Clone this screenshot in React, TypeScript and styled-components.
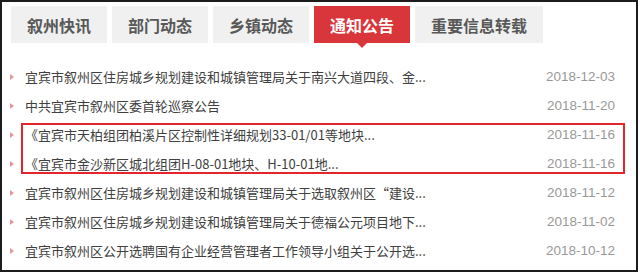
import React from 'react'
import styled, { createGlobalStyle } from 'styled-components'

const GlobalStyle = createGlobalStyle`
  html, body {
    margin: 0;
    padding: 0;
    background: #fff;
  }
  body {
    font-family: "Microsoft YaHei", "Noto Sans CJK SC", sans-serif;
  }
`

const Frame = styled.div`
  box-sizing: border-box;
  width: 638px;
  height: 272px;
  border: 2px solid #1c1c1c;
  padding: 4px 0 0 9px;
  background: #fff;
`

const TabBar = styled.div`
  display: flex;
  gap: 5px;
`

const Tab = styled.div<{ $active?: boolean }>`
  position: relative;
  height: 37px;
  padding: 0 16px;
  display: flex;
  align-items: center;
  font-size: 16px;
  font-weight: bold;
  color: ${p => (p.$active ? '#fff' : '#585858')};
  background: ${p => (p.$active ? '#d9363b' : '#f0f0f0')};

  ${p => p.$active && `
    &::after {
      content: '';
      position: absolute;
      left: 50%;
      bottom: -5px;
      margin-left: -5px;
      border-left: 5px solid transparent;
      border-right: 5px solid transparent;
      border-top: 5px solid #d9363b;
    }
  `}
`

const List = styled.ul`
  position: relative;
  list-style: none;
  margin: 19px 0 0 -9px;
  padding: 0;
`

const Row = styled.li`
  height: 29px;
  display: flex;
  align-items: center;
  padding: 0 21px 0 8px;
  font-size: 13px;
`

const Bullet = styled.span`
  width: 0;
  height: 0;
  border-top: 3.5px solid transparent;
  border-bottom: 3.5px solid transparent;
  border-left: 4px solid #e39a9a;
  margin-right: 11px;
  flex: none;
`

const Title = styled.span`
  flex: 1;
  color: #404040;
  white-space: nowrap;
`

const Date = styled.span`
  color: #999;
  font-size: 13.5px;
  font-family: "Liberation Sans", Arial, sans-serif;
`

const Highlight = styled.div`
  position: absolute;
  left: 19px;
  top: 61px;
  width: 604px;
  height: 51px;
  box-sizing: border-box;
  border: 2px solid #e3262b;
  pointer-events: none;
`

const tabs = ['叙州快讯', '部门动态', '乡镇动态', '通知公告', '重要信息转载']

const news = [
  { title: '宜宾市叙州区住房城乡规划建设和城镇管理局关于南兴大道四段、金...', date: '2018-12-03' },
  { title: '中共宜宾市叙州区委首轮巡察公告', date: '2018-11-20' },
  { title: '《宜宾市天柏组团柏溪片区控制性详细规划33-01/01等地块...', date: '2018-11-16' },
  { title: '《宜宾市金沙新区城北组团H-08-01地块、H-10-01地...', date: '2018-11-16' },
  { title: '宜宾市叙州区住房城乡规划建设和城镇管理局关于选取叙州区“建设...', date: '2018-11-12' },
  { title: '宜宾市叙州区住房城乡规划建设和城镇管理局关于德福公元项目地下...', date: '2018-11-02' },
  { title: '宜宾市叙州区公开选聘国有企业经营管理者工作领导小组关于公开选...', date: '2018-10-12' },
]

const App: React.FC = () => {
  return (
    <>
      <GlobalStyle />
      <Frame>
        <TabBar>
          {tabs.map(t => (
            <Tab key={t} $active={t === '通知公告'}>{t}</Tab>
          ))}
        </TabBar>
        <List>
          {news.map((n, i) => (
            <Row key={i}>
              <Bullet />
              <Title>{n.title}</Title>
              <Date>{n.date}</Date>
            </Row>
          ))}
          <Highlight />
        </List>
      </Frame>
    </>
  )
}

export default App
